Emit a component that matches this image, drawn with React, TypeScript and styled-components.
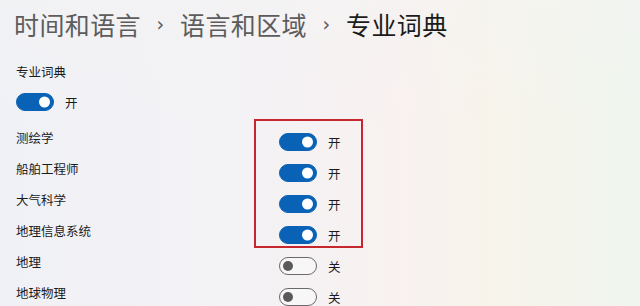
import React from "react";
import styled, { createGlobalStyle } from "styled-components";

const GlobalStyle = createGlobalStyle`
  html, body {
    margin: 0;
    padding: 0;
  }
  body {
    font-family: "Noto Sans CJK SC", "Noto Sans", sans-serif;
  }
`;

// page
const Page = styled.div`
  position: relative;
  width: 640px;
  height: 306px;
  overflow: hidden;
  background:
    linear-gradient(180deg, rgba(243, 243, 243, 0.5) 0%, rgba(243, 243, 243, 0) 40%),
    linear-gradient(90deg, #f0f1f6 0%, #f3f2f5 35%, #f8f1f0 62%, #f7f3ea 76%, #eff5ee 100%);
`;

const Header = styled.h1`
  display: flex;
  align-items: center;
  margin: 0;
  padding: 7px 0 0 14px;
  height: 34px;
  font-size: 25px;
  font-weight: 400;
  line-height: 34px;
  letter-spacing: 0.4px;
`;

const Crumb = styled.span<{ $current?: boolean }>`
  color: ${(p) => (p.$current ? "#1b1b1b" : "#5c5c5c")};
`;

const Chevron = styled.span`
  width: 39px;
  text-align: center;
  font-family: "DejaVu Sans", sans-serif;
  font-size: 19px;
  color: #5c5c5c;
`;

const Content = styled.div`
  position: relative;
  padding: 22px 0 0 16px;
`;

const SectionLabel = styled.div`
  font-size: 12.5px;
  line-height: 18px;
  color: #1b1b1b;
`;

const MasterRow = styled.div`
  display: flex;
  align-items: center;
  margin-top: 12px;
  height: 18px;
`;

// toggle
const Track = styled.span<{ $on: boolean }>`
  position: relative;
  box-sizing: border-box;
  flex: none;
  width: 38px;
  height: 18px;
  border-radius: 9px;
  background: ${(p) => (p.$on ? "#0a62b6" : "rgba(250, 250, 250, 0.6)")};
  border: 1px solid ${(p) => (p.$on ? "#0a62b6" : "#6a6a6a")};
`;

const Knob = styled.span<{ $on: boolean }>`
  position: absolute;
  top: 50%;
  width: ${(p) => (p.$on ? 11 : 10)}px;
  height: ${(p) => (p.$on ? 11 : 10)}px;
  border-radius: 50%;
  transform: translateY(-50%);
  background: ${(p) => (p.$on ? "#ffffff" : "#5a5a5a")};
  ${(p) => (p.$on ? "right: 3px;" : "left: 3px;")}
`;

const StateText = styled.span`
  margin-left: 11px;
  font-size: 12.5px;
  color: #1b1b1b;
`;

const List = styled.div`
  display: grid;
  grid-template-columns: 263px auto;
  grid-auto-rows: 31px;
  margin-top: 22px;
`;

const RowLabel = styled.div`
  align-self: start;
  margin-top: -4px;
  font-size: 12.5px;
  line-height: 18px;
  color: #1b1b1b;
`;

const RowControl = styled.div`
  display: flex;
  align-items: center;
  align-self: start;
  height: 18px;
`;

// annotation drawn over the toggles
const Highlight = styled.div`
  position: absolute;
  left: 254px;
  top: 119px;
  width: 109px;
  height: 129px;
  box-sizing: border-box;
  border: 2px solid #c6262e;
  pointer-events: none;
`;

function Toggle({ on }: { on: boolean }) {
  return (
    <>
      <Track $on={on}>
        <Knob $on={on} />
      </Track>
      <StateText>{on ? "开" : "关"}</StateText>
    </>
  );
}

const dictionaries = [
  { name: "测绘学", on: true },
  { name: "船舶工程师", on: true },
  { name: "大气科学", on: true },
  { name: "地理信息系统", on: true },
  { name: "地理", on: false },
  { name: "地球物理", on: false },
];

export default function App() {
  return (
    <Page>
      <GlobalStyle />
      <Header>
        <Crumb>时间和语言</Crumb>
        <Chevron>›</Chevron>
        <Crumb>语言和区域</Crumb>
        <Chevron>›</Chevron>
        <Crumb $current>专业词典</Crumb>
      </Header>
      <Content>
        <SectionLabel>专业词典</SectionLabel>
        <MasterRow>
          <Toggle on />
        </MasterRow>
        <List>
          {dictionaries.map((d) => (
            <React.Fragment key={d.name}>
              <RowLabel>{d.name}</RowLabel>
              <RowControl>
                <Toggle on={d.on} />
              </RowControl>
            </React.Fragment>
          ))}
        </List>
      </Content>
      <Highlight />
    </Page>
  );
}
